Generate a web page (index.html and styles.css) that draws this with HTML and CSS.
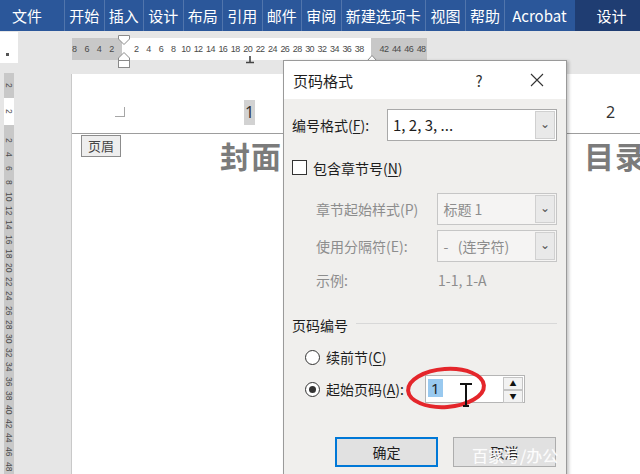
FILE: index.html
```html
<!DOCTYPE html>
<html lang="zh-CN">
<head>
  <meta charset="UTF-8" />
  <meta name="viewport" content="width=device-width, initial-scale=1.0" />
  <title>页码格式</title>
  <link rel="stylesheet" href="styles.css">
</head>
<body>
  <!-- ribbon tabs -->
  <div class="tabs">
    <span class="tab file">文件</span>
    <span class="tab">开始</span>
    <span class="tab">插入</span>
    <span class="tab">设计</span>
    <span class="tab">布局</span>
    <span class="tab">引用</span>
    <span class="tab">邮件</span>
    <span class="tab">审阅</span>
    <span class="tab">新建选项卡</span>
    <span class="tab">视图</span>
    <span class="tab">帮助</span>
    <span class="tab wide">Acrobat</span>
    <span class="tab context">设计</span>
  </div>

  <!-- horizontal ruler -->
  <div class="ruler-row">
    <div class="ruler-corner"><i></i></div>
    <div class="ruler">
      <div class="ruler-nums">
        <span>8</span><span>6</span><span>4</span><span>2</span><span></span>
        <span>2</span><span>4</span><span>6</span><span>8</span><span>10</span>
        <span>12</span><span>14</span><span>16</span><span>18</span><span>20</span>
        <span>22</span><span>24</span><span>26</span><span>28</span><span>30</span>
        <span>32</span><span>34</span><span>36</span><span>38</span><span></span>
        <span>42</span><span>44</span><span>46</span><span>48</span>
      </div>
      <svg class="indent-left" width="12" height="33" viewBox="0 0 12 33">
        <path d="M0.5 0.5 H11.5 V4 L6 9.5 L0.5 4 Z" fill="#fff" stroke="#8a8a8a" />
        <path d="M6 17.5 L11.5 23 V25.5 H0.5 V23 Z" fill="#fff" stroke="#8a8a8a" />
        <rect x="0.5" y="25.5" width="11" height="7" fill="#fff" stroke="#8a8a8a" />
      </svg>
      <svg class="tab-stop" width="10" height="8" viewBox="0 0 10 8">
        <path d="M5 0 V6 M1 6.5 H9" stroke="#444" stroke-width="1.6" />
      </svg>
      <svg class="indent-right" width="10" height="6" viewBox="0 0 10 6">
        <path d="M5 0.5 L9.5 5.5 H0.5 Z" fill="#fff" stroke="#8a8a8a" />
      </svg>
    </div>
  </div>

  <!-- document area -->
  <div class="workspace">
    <div class="vruler">
      <div class="vr-margin"><span>2</span></div>
      <div class="vr-white"><span>2</span></div>
      <div class="vr-rest">
        <span>2</span><span>4</span><span>6</span><span>8</span><span>10</span><span>12</span>
        <span>14</span><span>16</span><span>18</span><span>20</span><span>22</span><span>24</span>
        <span>26</span><span>28</span><span>30</span><span>32</span><span>34</span><span>36</span>
        <span>38</span><span>40</span><span>42</span><span>44</span><span>46</span><span>48</span>
      </div>
    </div>

    <div class="sheets">
      <div class="page one">
        <div class="page-head">
          <i class="corner"></i>
          <span class="page-num field">1</span>
        </div>
        <div class="page-body">
          <span class="head-tag">页眉</span>
          <h2 class="heading">封面</h2>
        </div>
      </div>
      <div class="page two">
        <div class="page-head">
          <span class="page-num">2</span>
        </div>
        <div class="page-body">
          <h2 class="heading">目录</h2>
        </div>
      </div>
    </div>
  </div>

  <!-- 页码格式 dialog -->
  <div class="dialog">
    <div class="dlg-title">
      <span class="title-text">页码格式</span>
      <span class="help">?</span>
      <svg class="close" width="14" height="14" viewBox="0 0 14 14">
        <path d="M1 1 L13 13 M13 1 L1 13" stroke="#333" stroke-width="1.1" />
      </svg>
    </div>

    <div class="dlg-body">
      <div class="field-row">
        <label class="lbl-main">编号格式(<u>F</u>):</label>
        <div class="select main">
          <span class="val">1, 2, 3, ...</span>
          <span class="drop">&#x2304;</span>
        </div>
      </div>

      <div class="check-row">
        <span class="checkbox"></span>
        <label>包含章节号(<u>N</u>)</label>
      </div>

      <div class="chapter">
        <div class="field-row">
          <label class="lbl-sub">章节起始样式(P)</label>
          <div class="select off">
            <span class="val">标题 1</span>
            <span class="drop">&#x2304;</span>
          </div>
        </div>
        <div class="field-row gap">
          <label class="lbl-sub">使用分隔符(E):</label>
          <div class="select off">
            <span class="val">-&nbsp;&nbsp;&nbsp;(连字符)</span>
            <span class="drop">&#x2304;</span>
          </div>
        </div>
        <div class="sample-row">
          <label class="lbl-sub">示例:</label>
          <span>1-1, 1-A</span>
        </div>
      </div>

      <div class="section">
        <span>页码编号</span>
        <i class="rule"></i>
      </div>

      <div class="radio-row">
        <span class="radio"></span>
        <label>续前节(<u>C</u>)</label>
      </div>
      <div class="radio-row start">
        <span class="radio on"></span>
        <label class="lbl-start">起始页码(<u>A</u>):</label>
        <div class="spin">
          <span class="val"><b class="sel">1</b></span>
          <span class="arrows">
            <span>&#x25B2;</span>
            <span>&#x25BC;</span>
          </span>
        </div>
      </div>

      <div class="buttons">
        <button class="btn ok">确定</button>
        <button class="btn">取消</button>
      </div>
    </div>
  </div>

  <!-- annotation over the start number -->
  <svg class="circle-mark" width="90" height="52" viewBox="0 0 90 52">
    <ellipse cx="44" cy="26" rx="38" ry="19" fill="none" stroke="#e4262b" stroke-width="4" transform="rotate(-4 44 26)" />
  </svg>
  <svg class="ibeam" width="14" height="26" viewBox="0 0 14 26">
    <path d="M1 2 H13 M7 2 V23 M4 24 H10" stroke="#111" stroke-width="2" fill="none" />
  </svg>

  <div class="watermark">百家号/办公</div>
</body>
</html>
```

FILE: styles.css
```css
* { box-sizing: border-box; }
body { margin: 0; width: 640px; height: 474px; overflow: hidden; background: #e6e6e6; font-family: "Noto Sans CJK SC", "Noto Sans", sans-serif; }

/* ribbon */
.tabs { display: flex; height: 31px; background: #2b579a; color: #fff; font-size: 15px; line-height: 31px; }
.tab { padding: 0 4.25px; border-left: 1px solid rgba(255, 255, 255, 0.18); white-space: nowrap; }
.tab.file { width: 64px; padding-left: 12px; border-left: none; }
.tab.wide { padding: 0 8px 0 7px; }
.tab.context { flex: 1; padding-left: 22px; background: #1f3d72; border-left: none; }

/* horizontal ruler */
.ruler-row { display: flex; height: 29px; }
.ruler-corner { width: 18px; height: 31px; margin-top: 1px; background: #fff; position: relative; }
.ruler-corner i { position: absolute; left: 6px; top: 21px; width: 3px; height: 3px; background: #555; }
.ruler { position: relative; margin: 7px 0 0 54px; width: 355px; height: 22px;
  background: linear-gradient(to right, #c8c8c8 0 50px, #fff 50px 299px, #c8c8c8 299px); }
.ruler-nums { display: flex; margin-left: -4px; font: 9px "Liberation Sans", sans-serif; color: #4a4a4a; line-height: 22px; letter-spacing: -0.6px; }
.ruler-nums span { width: 12.4px; flex: none; text-align: center; }
.indent-left { position: absolute; left: 46px; top: -3px; }
.tab-stop { position: absolute; left: 173px; top: 18px; }
.indent-right { position: absolute; left: 295px; top: 17px; }

/* document */
.workspace { display: flex; padding-top: 13px; }
.vruler { margin-left: 4px; width: 12px; display: flex; flex-direction: column; font: 8.5px "Liberation Sans", sans-serif; color: #4a4a4a; }
.vruler span { writing-mode: vertical-rl; display: flex; align-items: center; justify-content: center; height: 14.2px; }
.vr-margin { height: 25px; background: #c8c8c8; display: flex; align-items: center; justify-content: center; }
.vr-white { height: 27px; background: #fff; display: flex; align-items: center; justify-content: center; }
.vr-rest { height: 360px; background: #c8c8c8; padding-top: 8px; display: flex; flex-direction: column; align-items: center; }

.sheets { display: flex; gap: 8px; margin: 1px 0 0 57px; }
.page { background: #fff; height: 400px; border-left: 1px solid #c9c9c9; }
.page.one { width: 434px; }
.page.two { width: 140px; }
.page-head { height: 60px; border-bottom: 1px solid #9d9d9d; display: flex; align-items: flex-start; padding: 26px 0 0 43px; }
.corner { width: 10px; height: 10px; margin-top: 7px; border-right: 1px solid #a6a6a6; border-bottom: 1px solid #a6a6a6; }
.page-num { margin-left: 119px; width: 11px; line-height: 25px; font: 16px/25px "Noto Sans", sans-serif; color: #333; text-align: center; }
.page-num.field { background: #d2d2d2; }
.page.two .page-head { padding-left: 91px; }
.page.two .page-num { margin-left: 0; }
.page-body { display: flex; align-items: flex-start; }
.head-tag { margin: 1px 0 0 9px; padding: 0 6px; height: 22px; line-height: 20px; border: 1px solid #8c8c8c; background: #eeeeee; font-size: 13px; color: #444; }
.heading { margin: 1px 0 0 99px; font-size: 30px; line-height: 40px; font-weight: bold; color: #7b7b7b; letter-spacing: 1px; }
.page.two .heading { margin-left: 70px; }

/* dialog */
.dialog { position: absolute; left: 283px; top: 60px; width: 284px; height: 440px; border: 1px solid #9a9a9a; background: #f0efed;
  box-shadow: 2px 1px 3px rgba(0, 0, 0, 0.22); font-size: 14px; color: #1e1e1e; }
.dlg-title { height: 38px; background: #fff; display: flex; align-items: center; padding-left: 9px; }
.title-text { flex: 1; font-size: 15px; }
.help { width: 16px; text-align: center; font-size: 15px; color: #333; }
.close { margin: 0 22px 0 43px; }
.dlg-body { padding: 10px 9px 0 8px; }
label u { text-decoration: underline; text-underline-offset: 2px; }

.field-row { display: flex; align-items: center; height: 32px; }
.lbl-main { width: 95px; white-space: nowrap; }
.select { display: flex; height: 32px; border: 1px solid #a9a9a9; background: #fff; }
.select.main { width: 170px; font-size: 15px; }
.select .val { flex: 1; padding-left: 5px; line-height: 30px; white-space: nowrap; }
.select .drop { width: 20px; margin: 1px; border: 1px solid #d0d0d0; background: #e9e9e9; color: #555; font-size: 12px; line-height: 22px; text-align: center; }
.select.off { width: 120px; background: #f5f4f3; border-color: #c6c6c6; color: #8d8d8d; }

.check-row { display: flex; align-items: center; height: 15px; margin-top: 19px; }
.checkbox { width: 15px; height: 15px; border: 1px solid #333; background: #fff; margin-right: 6px; }

.chapter { padding-left: 24px; color: #8d8d8d; }
.chapter .field-row { margin-top: 18px; }
.chapter .field-row.gap { margin-top: 5px; }
.lbl-sub { width: 122px; white-space: nowrap; }
.sample-row { display: flex; align-items: center; height: 20px; margin-top: 8px; }

.section { display: flex; align-items: center; height: 20px; margin-top: 25px; }
.section .rule { flex: 1; margin: -3px 0 0 8px; border-top: 1px solid #d8d8d8; }

.radio-row { display: flex; align-items: center; height: 20px; margin-top: 12px; padding-left: 13px; }
.radio-row.start { height: 28px; margin-top: 8px; }
.radio { width: 15px; height: 15px; border: 1px solid #333; border-radius: 50%; background: #fff; margin-right: 6px; display: flex; align-items: center; justify-content: center; }
.radio.on::after { content: ""; width: 7px; height: 7px; border-radius: 50%; background: #333; }
.lbl-start { width: 99px; white-space: nowrap; }
.spin { display: flex; width: 100px; height: 28px; border: 1px solid #b5b5b5; background: #fff; }
.spin .val { flex: 1; padding: 2px 0 0 2px; }
.spin .sel { display: inline-block; font-weight: normal; font: 15px/18px "Noto Sans", sans-serif; padding: 0 3px; background: #99c9ef; }
.arrows { width: 20px; margin: 1px; display: flex; flex-direction: column; }
.arrows span { flex: 1; border: 1px solid #c4c4c4; background: #f2f2f2; font-size: 7px; line-height: 11px; text-align: center; color: #111; }

.buttons { display: flex; gap: 15px; margin-top: 34px; padding-left: 43px; }
.btn { width: 103px; height: 30px; border: 1px solid #adadad; background: #e1e1e1; font: 14px "Noto Sans CJK SC", sans-serif; color: #1e1e1e; padding: 0; }
.btn.ok { border: 2px solid #0078d7; }

/* overlays */
.circle-mark { position: absolute; left: 402px; top: 362px; }
.ibeam { position: absolute; left: 459px; top: 382px; }
.watermark { position: absolute; left: 472px; top: 443px; font-size: 16px; color: rgba(255, 255, 255, 0.88); text-shadow: 0 0 1px rgba(255, 255, 255, 0.5); }
```
